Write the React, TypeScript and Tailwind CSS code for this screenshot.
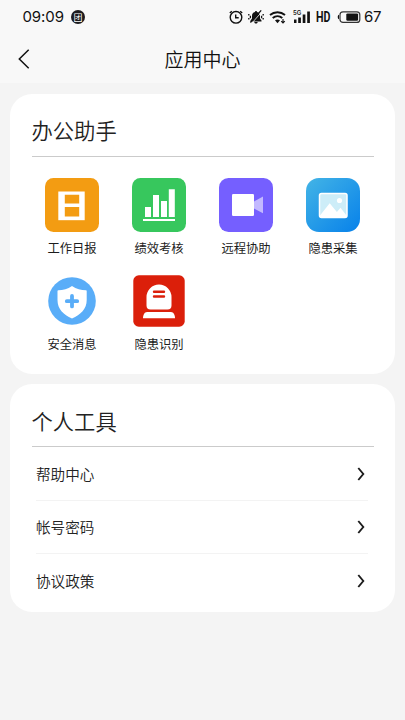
import React from "react";

interface Tool {
    name: string;
    icon: React.ReactNode;
}

const tools: Tool[] = [
    { name: "工作日报", icon: <ReportIcon /> },
    { name: "绩效考核", icon: <ChartIcon /> },
    { name: "远程协助", icon: <VideoIcon /> },
    { name: "隐患采集", icon: <PictureIcon /> },
    { name: "安全消息", icon: <ShieldIcon /> },
    { name: "隐患识别", icon: <AlarmIcon /> },
];

const links = ["帮助中心", "帐号密码", "协议政策"];

function ReportIcon() {
    return (
        <svg width="54" height="54" viewBox="0 0 54 54">
            <rect width="54" height="54" rx="8.5" fill="#f39c12" />
            <path d="M13.3 13.5h26.4v28.7H13.3z" fill="#fff" />
            <path d="M19.8 16.7h14.4v8.8H19.8zM19.8 29h14.4v9.5H19.8z" fill="#f39c12" />
        </svg>
    );
}

function ChartIcon() {
    return (
        <svg width="54" height="54" viewBox="0 0 54 54">
            <rect width="54" height="54" rx="8.5" fill="#37c75d" />
            <path d="M13 29h6v10h-6zM21 17h6v22h-6zM29 23h6v16h-6zM36.8 11.3h6V39h-6zM11 41h32v2H11z" fill="#fff" />
        </svg>
    );
}

function VideoIcon() {
    return (
        <svg width="54" height="54" viewBox="0 0 54 54">
            <rect width="54" height="54" rx="9.5" fill="#755fff" />
            <path d="M44 18.6v16.6l-10-5.3v-5.8z" fill="#c3b9ff" />
            <rect x="13" y="16" width="22" height="22" rx="1.2" fill="#fff" />
        </svg>
    );
}

function PictureIcon() {
    return (
        <svg width="54" height="54" viewBox="0 0 54 54">
            <defs>
                <linearGradient id="picture-bg" x1="0" y1="0" x2="1" y2="1">
                    <stop offset="0" stopColor="#43b4e6" />
                    <stop offset="1" stopColor="#0781ea" />
                </linearGradient>
            </defs>
            <rect width="54" height="54" rx="13" fill="url(#picture-bg)" />
            <rect x="13.5" y="15.5" width="27.5" height="24" rx="2" fill="#cdedf8" stroke="#fff" strokeWidth="1.5" />
            <circle cx="33.5" cy="22.5" r="2.6" fill="#fff" />
            <path d="M14 37.5l9.7-12.3 7.2 8.8 3.6-4.2 6 7.7v1.8H14z" fill="#fff" />
        </svg>
    );
}

function ShieldIcon() {
    return (
        <svg width="48" height="48" viewBox="0 0 48 48">
            <circle cx="24" cy="24" r="23.8" fill="#59adf8" />
            <path d="M24 9c4.4 3 9 4.2 14 4.3.5 0 .7.3.7.8V23c0 9-6 14.5-14.7 18.5C15.3 37.5 9.5 32 9.5 23v-8.9c0-.5.3-.8.8-.8C15.2 13.2 19.7 12 24 9z" fill="#fff" />
            <path d="M24 19v10.4M18.8 24.2h10.4" stroke="#59adf8" strokeWidth="3.8" strokeLinecap="round" />
        </svg>
    );
}

function AlarmIcon() {
    return (
        <svg width="52" height="52" viewBox="0 0 52 52">
            <rect x="0.3" y="0.3" width="51.4" height="51.4" rx="5.5" fill="#db1f0a" />
            <path d="M13.5 22a12.5 12.5 0 0 1 25 0v8.5a4 4 0 0 1-4 4h-17a4 4 0 0 1-4-4z" fill="#fff" />
            <path d="M14 37h24c2.5 0 4 3 4 6.3H10C10 40 11.5 37 14 37z" fill="#fff" />
            <path d="M21 16.7h10M21 21.5h10" stroke="#db1f0a" strokeWidth="2.4" strokeLinecap="round" />
        </svg>
    );
}

function StatusBar() {
    return (
        <div className="flex h-[34px] items-center pl-[22.5px] pr-[24px] font-['Inter','Noto_Sans_CJK_SC',sans-serif] text-[15px] text-[#111]">
            <span className="w-[48.5px] tracking-[-0.1px]">09:09</span>
            <span className="flex h-3.5 w-3.5 items-center justify-center rounded-full bg-[#1b1b1e] text-[9px] leading-none text-white">团</span>

            {/* alarm clock */}
            <svg className="ml-auto" width="14" height="14" viewBox="0 0 14 14" fill="none" stroke="#111" strokeWidth="1.4">
                <circle cx="7" cy="7.3" r="5.8" />
                <path d="M6.7 4.5v3.3h3M.8 3l2-1.7M13.2 3l-2-1.7" />
            </svg>
            {/* muted bell */}
            <svg className="ml-[5px]" width="16" height="14" viewBox="0 0 16 14">
                <path d="M8 1c.7 0 1 .5 1 1 2.2.6 3 2 3 4v2.5l1.5 2v.9h-11v-.9l1.5-2V6c0-2 .8-3.4 3-4 0-.5.3-1 1-1zM6.3 12h3.4c-.2 1.2-.8 1.6-1.7 1.6S6.5 13.2 6.3 12z" fill="#111" />
                <path d="M3.4 13.6L14.2 1.5" stroke="#f8f8f8" strokeWidth="0.8" />
                <path d="M2.4 12.5L13.2.4M.8 4v1.6M.8 8v1.6M2.4 5.8v2.4M15.2 4v1.6M15.2 8v1.6M13.6 5.8v2.4" stroke="#111" strokeWidth="1.3" />
            </svg>
            {/* wifi */}
            <svg className="ml-[5px]" width="17" height="14" viewBox="0 0 17 14" fill="none" stroke="#111" strokeWidth="1.9">
                <path d="M1 5c4.3-3.7 10.7-3.7 15 0M3.7 8c2.8-2.4 6.8-2.4 9.6 0" />
                <path d="M6 10.3c1.5-1.2 3.5-1.2 5 0l-2.5 2.9z" fill="#111" stroke="none" />
                <path d="M14 9v4M12.2 11.2L14 13l1.8-1.8" strokeWidth="1.1" />
            </svg>
            {/* signal */}
            <span className="relative ml-[7px] block h-3.5 w-[18px]">
                <svg width="18" height="14" viewBox="0 0 18 14">
                    <path d="M1 9.5h2.5V13H1zM5.2 7.5h2.7V13H5.2zM9.7 4.5h2.7V13H9.7zM14.2 1.5h2.7V13h-2.7z" fill="#111" />
                </svg>
                <span className="absolute -top-px left-0 text-[6px] leading-[8px] font-semibold">5G</span>
            </span>
            <span className="ml-[5px] w-[15px] font-['Roboto',sans-serif] text-[14px] font-bold">
                <span className="block origin-left scale-x-[0.76]">HD</span>
            </span>
            {/* battery */}
            <svg className="ml-[6px]" width="24" height="14" viewBox="0 0 24 14">
                <path d="M2 4.8C.3 5 .3 9 2 9.2z" fill="#111" />
                <rect x="3" y="1.8" width="19.8" height="10.6" rx="3" fill="none" stroke="#333" strokeWidth="1.2" />
                <rect x="9.3" y="3.4" width="11.8" height="7.4" rx="1.2" fill="#111" />
            </svg>
            <span className="ml-[3px] w-[17px] tracking-[-0.3px]">67</span>
        </div>
    );
}

function NavBar() {
    return (
        <div className="flex h-[49px] items-center px-[17px]">
            <svg width="14" height="22" viewBox="0 0 14 22" fill="none" stroke="#111" strokeWidth="1.5">
                <path d="M11.7 1.7L2.3 11l9.4 9.3" />
            </svg>
            <h1 className="mr-3.5 flex-1 text-center text-[19px] leading-6 font-[350] text-[#111]">应用中心</h1>
        </div>
    );
}

function Card({ title, children }: { title: string; children: React.ReactNode }) {
    return (
        <section className="rounded-[22px] bg-white px-[21.5px]">
            <h2 className="h-[63px] border-b border-[#cbcbcb] pt-[20.8px] text-[21.3px] leading-8 font-[350] text-[#222]">{title}</h2>
            {children}
        </section>
    );
}

export default function App() {
    return (
        <div className="flex h-[720px] w-[405px] flex-col overflow-hidden bg-[#f4f4f4] font-['Noto_Sans_CJK_SC',sans-serif]">
            <header className="bg-[#f8f8f8]">
                <StatusBar />
                <NavBar />
            </header>

            <main className="flex flex-col gap-2.5 px-2.5 pt-[10.6px]">
                <Card title="办公助手">
                    <div className="-mx-[3px] grid grid-cols-4 gap-y-[17px] pt-[21.4px] pb-[21px]">
                        {tools.map((tool) => (
                            <div key={tool.name} className="flex flex-col items-center">
                                <div className="flex h-[54px] items-center">{tool.icon}</div>
                                <span className="mt-[7px] text-[12.3px] leading-[18px] text-[#1c1c1c]">{tool.name}</span>
                            </div>
                        ))}
                    </div>
                </Card>

                <Card title="个人工具">
                    <ul className="pt-[0.6px] pr-[6px] pb-[4px] pl-[4.5px]">
                        {links.map((link) => (
                            <li key={link} className="flex h-[53.4px] items-center justify-between border-b border-[#f3f3f3] pr-[2.5px] last:border-b-0">
                                <span className="text-[14.6px] leading-5 font-[350] text-[#222]">{link}</span>
                                <svg width="8" height="14" viewBox="0 0 8 14" fill="none" stroke="#1c1c1c" strokeWidth="1.9">
                                    <path d="M1.3 1l5 6-5 6" />
                                </svg>
                            </li>
                        ))}
                    </ul>
                </Card>
            </main>
        </div>
    );
}
